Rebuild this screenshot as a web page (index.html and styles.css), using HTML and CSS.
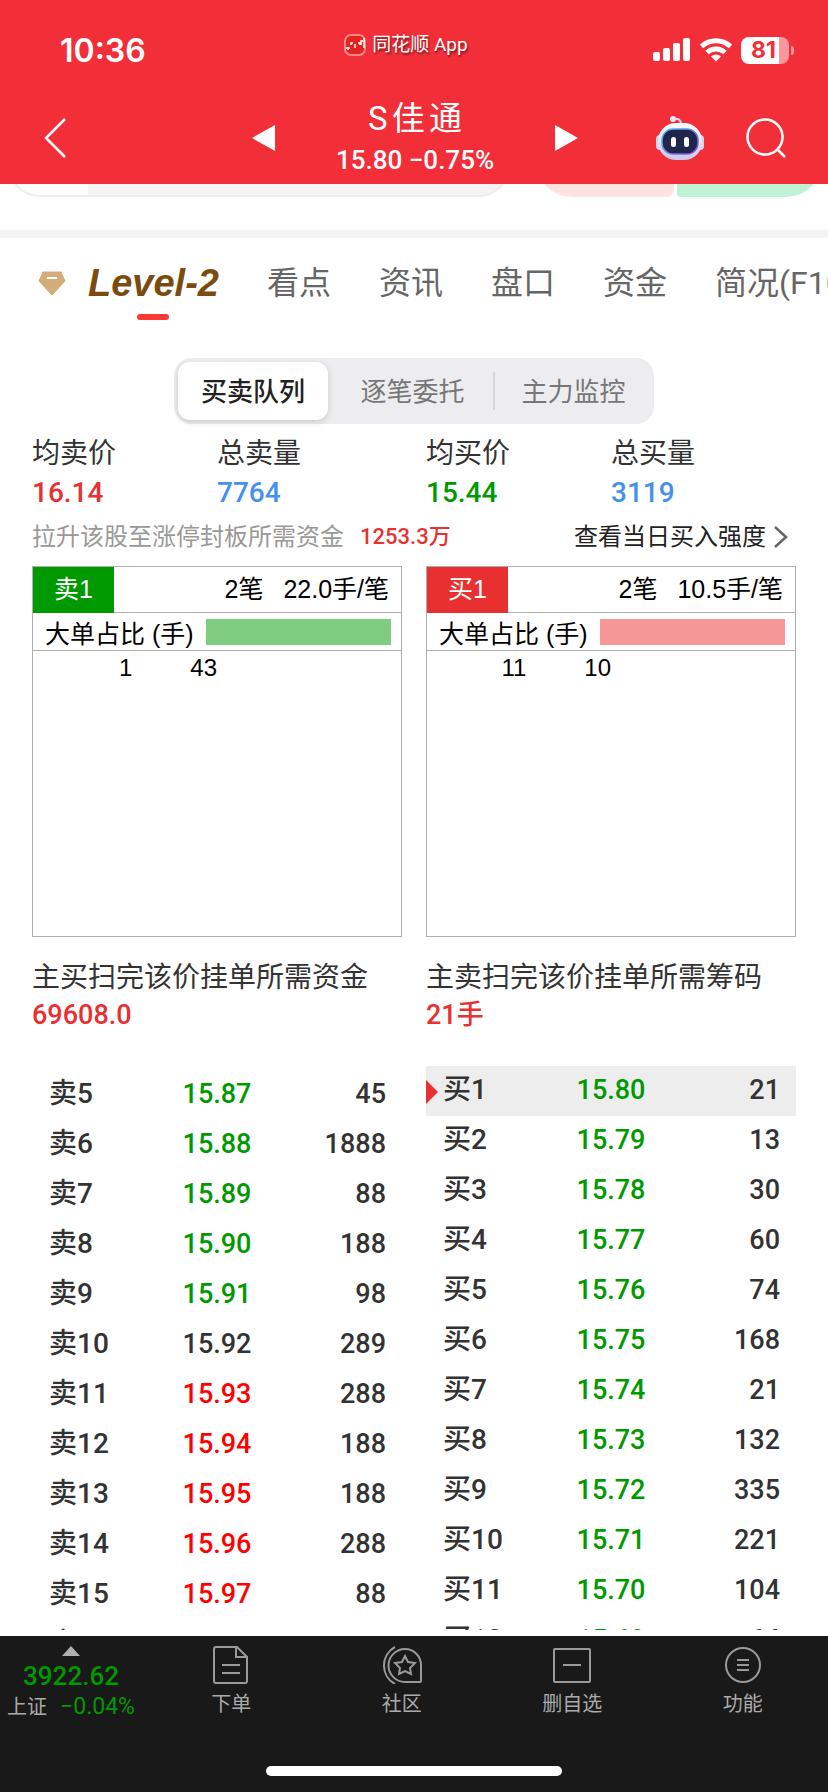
FILE: index.html
```html
<!DOCTYPE html>
<html lang="zh-CN">
<head>
  <meta charset="UTF-8" />
  <meta name="viewport" content="width=device-width, initial-scale=1.0" />
  <title>S佳通 15.80</title>
  <link rel="stylesheet" href="styles.css">
</head>
<body>
  <header class="header">
    <div class="status">
      <span class="clock">10:36</span>
      <span class="app-badge">
        <svg width="22" height="22" viewBox="0 0 22 22" fill="none">
          <rect x="1" y="1" width="20" height="20" rx="6" fill="#e5241f" stroke="#f58a8a" stroke-width="2" />
          <path d="M2 14h2v2M5 15v-2M7 11v-2h2M11 10v4M14 9h2v2M17 11V7h2M20 4v10" stroke="#fff" stroke-width="1.5" />
        </svg>
        同花顺 App
      </span>
      <span class="status-icons">
        <svg width="38" height="24" viewBox="0 0 38 24" fill="#fff">
          <rect x="0" y="14" width="7" height="9" rx="2" />
          <rect x="10" y="10" width="7" height="13" rx="2" />
          <rect x="20" y="5" width="7" height="18" rx="2" />
          <rect x="30" y="0" width="7" height="23" rx="2" />
        </svg>
        <svg width="32" height="24" viewBox="0 0 32 24" fill="none" stroke="#fff" stroke-width="5">
          <path d="M1.500 8.500a21 21 0 0 1 29 0" />
          <path d="M7 14.500a13 13 0 0 1 18 0" />
          <path d="M16 23.500l-5-5a7.500 7.500 0 0 1 10 0z" fill="#fff" stroke="none" />
        </svg>
        <span class="battery">81</span>
      </span>
    </div>
    <nav class="nav">
      <button class="icon-btn" aria-label="返回">
        <svg width="24" height="42" viewBox="0 0 24 42" fill="none" stroke="#fff" stroke-width="2.500">
          <path d="M21 2L2 21l19 19" />
        </svg>
      </button>
      <div class="stock">
        <button class="icon-btn" aria-label="上一只">
          <svg width="24" height="26" viewBox="0 0 24 26"><path d="M24 0v26L1 13z" fill="#fff" /></svg>
        </button>
        <div class="stock-title">
          <h1>S 佳 通</h1>
          <p>15.80 −0.75%</p>
        </div>
        <button class="icon-btn" aria-label="下一只">
          <svg width="24" height="26" viewBox="0 0 24 26"><path d="M0 0v26l23-13z" fill="#fff" /></svg>
        </button>
      </div>
      <div class="nav-actions">
        <button class="icon-btn" aria-label="智能助手">
          <svg width="48" height="45" viewBox="0 0 48 45">
            <defs>
              <linearGradient id="head" x1="0" y1="0" x2="0" y2="1">
                <stop offset="0" stop-color="#fff" />
                <stop offset="1" stop-color="#c9c8ea" />
              </linearGradient>
              <linearGradient id="rim" x1="0" y1="0" x2="1" y2="1">
                <stop offset="0" stop-color="#4fc3e8" />
                <stop offset="1" stop-color="#8a3ff0" />
              </linearGradient>
            </defs>
            <path d="M18 3c4-1 7 1 7 5" fill="none" stroke="#dcd9ef" stroke-width="2" />
            <circle cx="17" cy="3" r="3" fill="#e9e6f6" />
            <rect x="0" y="19" width="8" height="15" rx="4" fill="#d5d4f0" />
            <rect x="40" y="19" width="8" height="15" rx="4" fill="#d5d4f0" />
            <rect x="2" y="7" width="44" height="37" rx="18" fill="url(#head)" />
            <rect x="6" y="13" width="36" height="25" rx="11" fill="#20264a" stroke="url(#rim)" stroke-width="1.500" />
            <rect x="15" y="21" width="5" height="10" rx="2.500" fill="#fff" />
            <rect x="28" y="21" width="5" height="10" rx="2.500" fill="#fff" />
          </svg>
        </button>
        <button class="icon-btn" aria-label="搜索">
          <svg width="40" height="40" viewBox="0 0 40 40" fill="none" stroke="#fff" stroke-width="2.500">
            <circle cx="19" cy="19" r="17.500" />
            <path d="M32 32l7 7" />
          </svg>
        </button>
      </div>
    </nav>
  </header>

  <main class="content">
    <div class="peek">
      <div class="peek-search"></div>
      <div class="peek-sell"></div>
      <div class="peek-buy"></div>
    </div>

    <nav class="tabs">
      <svg class="gem" width="28" height="25" viewBox="0 0 28 25">
        <path d="M5 1h18l4 9-13 14L1 10z" fill="#d3ad79" stroke="#d3ad79" stroke-linejoin="round" />
        <path d="M9 7h10" stroke="#fff" stroke-width="2" />
      </svg>
      <a href="#" class="tab level">Level-2</a>
      <a href="#" class="tab">看点</a>
      <a href="#" class="tab">资讯</a>
      <a href="#" class="tab">盘口</a>
      <a href="#" class="tab">资金</a>
      <a href="#" class="tab">简况(F10)</a>
    </nav>

    <div class="segments">
      <button class="segment active">买卖队列</button>
      <button class="segment">逐笔委托</button>
      <button class="segment">主力监控</button>
    </div>

    <section class="columns stats">
      <dl>
        <div><dt>均卖价</dt><dd class="red">16.14</dd></div>
        <div><dt>总卖量</dt><dd class="blue">7764</dd></div>
      </dl>
      <dl>
        <div><dt>均买价</dt><dd class="green">15.44</dd></div>
        <div><dt>总买量</dt><dd class="blue">3119</dd></div>
      </dl>
    </section>

    <div class="limit-line">
      <span class="hint">拉升该股至涨停封板所需资金</span>
      <span class="limit-value">1253.3万</span>
      <a href="#" class="more">查看当日买入强度
        <svg width="14" height="24" viewBox="0 0 14 24" fill="none" stroke="#666" stroke-width="2.500"><path d="M1 2l11 10L1 22" /></svg>
      </a>
    </div>

    <section class="columns">
      <div class="queue sell">
        <div class="queue-head"><span class="tag">卖1</span><span>2笔</span><span>22.0手/笔</span></div>
        <div class="queue-ratio"><span>大单占比 (手)</span><span class="ratio-bar"></span></div>
        <div class="queue-orders"><span>1</span><span>43</span></div>
      </div>
      <div class="queue buy">
        <div class="queue-head"><span class="tag">买1</span><span>2笔</span><span>10.5手/笔</span></div>
        <div class="queue-ratio"><span>大单占比 (手)</span><span class="ratio-bar"></span></div>
        <div class="queue-orders"><span>11</span><span>10</span></div>
      </div>
    </section>

    <section class="columns sweep">
      <div><p>主买扫完该价挂单所需资金</p><strong>69608.0</strong></div>
      <div><p>主卖扫完该价挂单所需筹码</p><strong>21手</strong></div>
    </section>

    <section class="columns books">
      <table class="book asks">
        <tr><th>卖5</th><td class="green">15.87</td><td>45</td></tr>
        <tr><th>卖6</th><td class="green">15.88</td><td>1888</td></tr>
        <tr><th>卖7</th><td class="green">15.89</td><td>88</td></tr>
        <tr><th>卖8</th><td class="green">15.90</td><td>188</td></tr>
        <tr><th>卖9</th><td class="green">15.91</td><td>98</td></tr>
        <tr><th>卖10</th><td>15.92</td><td>289</td></tr>
        <tr><th>卖11</th><td class="up">15.93</td><td>288</td></tr>
        <tr><th>卖12</th><td class="up">15.94</td><td>188</td></tr>
        <tr><th>卖13</th><td class="up">15.95</td><td>188</td></tr>
        <tr><th>卖14</th><td class="up">15.96</td><td>288</td></tr>
        <tr><th>卖15</th><td class="up">15.97</td><td>88</td></tr>
        <tr><th>卖16</th><td class="up">15.98</td><td>88</td></tr>
      </table>
      <table class="book bids">
        <tr class="current"><th>买1</th><td class="green">15.80</td><td>21</td></tr>
        <tr><th>买2</th><td class="green">15.79</td><td>13</td></tr>
        <tr><th>买3</th><td class="green">15.78</td><td>30</td></tr>
        <tr><th>买4</th><td class="green">15.77</td><td>60</td></tr>
        <tr><th>买5</th><td class="green">15.76</td><td>74</td></tr>
        <tr><th>买6</th><td class="green">15.75</td><td>168</td></tr>
        <tr><th>买7</th><td class="green">15.74</td><td>21</td></tr>
        <tr><th>买8</th><td class="green">15.73</td><td>132</td></tr>
        <tr><th>买9</th><td class="green">15.72</td><td>335</td></tr>
        <tr><th>买10</th><td class="green">15.71</td><td>221</td></tr>
        <tr><th>买11</th><td class="green">15.70</td><td>104</td></tr>
        <tr><th>买12</th><td class="green">15.69</td><td>64</td></tr>
      </table>
    </section>
  </main>

  <footer class="footer">
    <div class="toolbar">
      <button class="tool index">
        <svg width="18" height="10" viewBox="0 0 18 10"><path d="M9 0l9 10H0z" fill="#b0b0b0" /></svg>
        <span class="index-value">3922.62</span>
        <span class="index-change">上证 <em>−0.04%</em></span>
      </button>
      <button class="tool">
        <svg width="38" height="38" viewBox="0 0 38 38" fill="none" stroke="#999" stroke-width="2">
          <path d="M25 1H4a2 2 0 0 0-2 2v32a2 2 0 0 0 2 2h29a2 2 0 0 0 2-2V11zM24 1v10h11M10 19h18M10 27h18" />
        </svg>
        下单
      </button>
      <button class="tool">
        <svg width="42" height="38" viewBox="0 0 42 38" fill="none" stroke="#999" stroke-width="2">
          <path d="M14 1a21 21 0 0 0 0 37" />
          <path d="M24 3a16.500 16.500 0 0 0 0 33h15a1 1 0 0 0 1-1V19A16 16 0 0 0 24 3z" />
          <path d="M24 10l3 6 7 1-5 5 1 6-6-3-6 3 1-6-5-5 7-1z" />
        </svg>
        社区
      </button>
      <button class="tool">
        <svg width="38" height="38" viewBox="0 0 38 38" fill="none" stroke="#999" stroke-width="2">
          <rect x="1" y="3" width="36" height="33" rx="1" />
          <path d="M10 19h18" />
        </svg>
        删自选
      </button>
      <button class="tool">
        <svg width="38" height="38" viewBox="0 0 38 38" fill="none" stroke="#999" stroke-width="2">
          <circle cx="19" cy="19" r="17" />
          <path d="M13 14h12M13 19h12M13 24h12" />
        </svg>
        功能
      </button>
    </div>
    <div class="home-bar"></div>
  </footer>
</body>
</html>
```
FILE: styles.css
```css
* { box-sizing: border-box; margin: 0; padding: 0; }
body {
  font-family: Roboto, "Noto Sans CJK SC", sans-serif;
  color: #333; background: #fff;
  display: flex; flex-direction: column;
  height: 100vh; overflow: hidden;
}
button { font: inherit; color: inherit; background: none; border: none; cursor: pointer; }
a { color: inherit; text-decoration: none; }
svg { display: block; flex: none; }
.red { color: #e93030; }
.up { color: #f00; }
.green { color: #090; }
.blue { color: #4691ee; }

/* header */
.header { background: #f22f39; color: #fff; flex: none; padding-bottom: 4px; }
.status {
  display: grid; grid-template-columns: 1fr auto 1fr; align-items: center;
  height: 96px; padding: 4px 34px 0;
}
.clock { padding-left: 26px; font-family: Inter, sans-serif; font-size: 32px; font-weight: 600; }
.app-badge {
  display: flex; align-items: center; gap: 6px; padding: 0 16px 10px 0;
  font-size: 19px; line-height: 24px; text-shadow: 1px 2px 2px rgba(0, 0, 0, 0.5);
}
.status-icons { display: flex; align-items: center; justify-content: flex-end; gap: 9px; }
.battery {
  position: relative; width: 48px; height: 27px; border-radius: 8px;
  background: linear-gradient(90deg, #fff 80%, #f8979c 80%);
  color: #f22f39; text-align: center; padding-right: 3px; margin-right: 5px;
  font: 700 23px/27px Inter, sans-serif;
}
.battery::after {
  content: ""; position: absolute; right: -5px; top: 9px;
  width: 3px; height: 9px; border-radius: 0 3px 3px 0; background: #f8979c;
}
.nav {
  display: grid; grid-template-columns: 1fr 328px 1fr; align-items: center;
  height: 84px; padding: 0 42px 0 44px;
}
.icon-btn { display: block; }
.stock { display: flex; align-items: center; justify-content: space-between; }
.stock-title { text-align: center; }
.stock-title h1 { font-size: 33px; line-height: 44px; font-weight: 400; word-spacing: -4px; }
.stock-title p { font-size: 26px; line-height: 38px; font-weight: 500; }
.nav-actions { display: flex; align-items: center; justify-content: flex-end; gap: 42px; }

.content { flex: 1; min-height: 0; overflow: hidden; margin-bottom: 6px; }
/* bottom edge of the block scrolled under the header */
.peek {
  display: flex; align-items: flex-end; height: 54px; overflow: hidden;
  padding: 0 6px 33px 8px; border-bottom: 8px solid #f4f4f4;
}
.peek > div { height: 44px; flex: none; }
.peek-search {
  width: 502px; margin-right: 26px; border: 2px solid #eee; border-radius: 0 0 32px 32px;
  background: linear-gradient(90deg, #fff 78px, #f4f4f4 78px);
}
.peek-sell { width: 138px; margin-right: 3px; background: #fde3e0; border-radius: 0 0 8px 36px; }
.peek .peek-buy { flex: 1; background: #c0f2d6; border-radius: 0 0 36px 4px; }

.tabs {
  display: flex; align-items: center; gap: 48px;
  height: 90px; padding-left: 38px; overflow: hidden;
  font-size: 32px; color: #666; white-space: nowrap;
}
.gem { margin-right: -26px; }
.tab { position: relative; line-height: 48px; }
.level { font: italic 700 38px/48px "Liberation Sans", sans-serif; color: #7a4c10; }
.level::after {
  content: ""; position: absolute; left: 50%; bottom: -13px; margin-left: -16px;
  width: 32px; height: 6px; border-radius: 3px; background: #ff3a33;
}

.segments {
  display: flex; width: 480px; height: 66px; margin: 30px auto 0; padding: 4px 0 4px 4px;
  border-radius: 18px; background: #ededef;
}
.segment { position: relative; flex: 1; padding-bottom: 4px; font-size: 26px; color: #777; }
.segment.active {
  flex: none; width: 150px; margin-right: 4px; border-radius: 12px; background: #fff;
  color: #222; font-weight: 500; box-shadow: 0 2px 6px rgba(0, 0, 0, 0.15);
}
.segment:last-child::before {
  content: ""; position: absolute; left: 0; top: 10px;
  width: 2px; height: 38px; background: #d5d5d7;
}

/* sell side on the left, buy side on the right */
.columns { display: grid; grid-template-columns: 1fr 1fr; gap: 24px; padding: 0 32px; }
.stats dl { display: grid; grid-template-columns: 1fr 1fr; }
.stats { padding-top: 10px; }
.stats dt { font-size: 28px; line-height: 40px; }
.stats dd { font-size: 28px; line-height: 38px; font-weight: 500; }

.limit-line {
  display: flex; align-items: center; height: 38px; margin: 6px 40px 10px 32px;
  font-size: 24px; line-height: 38px;
}
.hint { color: #999; }
.limit-value { margin-left: 16px; font-size: 22px; font-weight: 500; color: #e93030; }
.more { display: flex; align-items: center; gap: 8px; margin-left: auto; color: #222; }

.queue {
  height: 371px; border: 1px solid #b0b0b0; color: #000;
  font: 25px "Liberation Sans", "Noto Sans CJK SC", sans-serif;
}
.queue-head {
  display: flex; gap: 20px; height: 46px; line-height: 44px; padding-right: 12px;
  border-bottom: 1px solid #b0b0b0;
}
.tag { width: 81px; height: 46px; margin-right: auto; color: #fff; text-align: center; }
.sell .tag { background: #090; }
.buy .tag { background: #e93030; }
.queue-ratio {
  display: flex; align-items: center; gap: 12px; height: 38px; padding: 0 10px 0 12px;
  border-bottom: 1px solid #b0b0b0;
}
.ratio-bar { flex: 1; height: 26px; }
.sell .ratio-bar { background: #80cc80; }
.buy .ratio-bar { background: #f59797; }
.queue-orders { display: flex; font-size: 24px; line-height: 34px; text-align: right; }
.queue-orders span { width: 27%; }
.queue-orders span + span { width: 23%; }

.sweep { padding-top: 22px; line-height: 38px; }
.sweep p { font-size: 28px; line-height: 37px; }
.sweep strong { display: block; font-size: 27px; font-weight: 500; color: #e93030; }

.books { padding-top: 32px; align-items: start; }
.book {
  width: 100%; table-layout: fixed; border-collapse: collapse;
  font-size: 27px; line-height: 46px; font-weight: 500;
}
.asks { margin-top: 4px; }
.book tr { height: 50px; }
.book th { font-size: 28px; font-weight: 500; text-align: left; padding: 0 0 2px 17px; }
.book td { text-align: center; padding-bottom: 2px; }
.book td:last-child { text-align: right; padding-right: 16px; }
.current { background: #ededed; }
.current th { position: relative; }
.current th::before {
  content: ""; position: absolute; left: 0; top: 14px;
  border: solid transparent; border-width: 12px 0 12px 12px; border-left-color: #e93030;
}

/* bottom toolbar */
.footer { flex: none; height: 156px; background: #191919; color: #aaa; }
.toolbar { display: flex; height: 130px; padding-top: 10px; }
.tool {
  flex: 1; display: flex; flex-direction: column; align-items: center; gap: 5px;
  font-size: 20px; line-height: 30px;
}
.index { flex: none; width: 146px; padding-right: 4px; gap: 0; }
.index-value { font-size: 26px; line-height: 40px; font-weight: 500; color: #090; }
.index-change { line-height: 22px; white-space: nowrap; }
.index-change em { margin-left: 8px; font-style: normal; font-size: 23px; color: #090; }
.home-bar { width: 296px; height: 10px; margin: 0 auto; border-radius: 5px; background: #fff; }
```
